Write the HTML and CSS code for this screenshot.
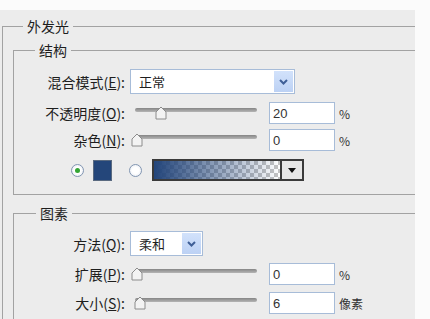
FILE: index.html
```html
<!DOCTYPE html>
<html lang="zh-CN">
<head>
    <meta charset="UTF-8">
    <meta name="viewport" content="width=device-width, initial-scale=1.0">
    <title>外发光</title>
    <link rel="stylesheet" href="styles.css">
</head>
<body>
    <div class="panel">
        <fieldset class="group outer">
            <legend>外发光</legend>

            <fieldset class="group inner struct">
                <legend>结构</legend>
                <div class="row row-select">
                    <label class="lbl">混合模式(<u>E</u>):</label>
                    <div class="select select-wide">
                        <span class="select-text">正常</span>
                        <span class="drop"><svg width="9" height="6" viewBox="0 0 9 6"><polyline points="1,1 4.5,4.5 8,1" fill="none" stroke="#3f5f97" stroke-width="2"/></svg></span>
                    </div>
                </div>
                <div class="row row-opacity">
                    <label class="lbl">不透明度(<u>O</u>):</label>
                    <div class="slider">
                        <svg class="thumb" style="left:25px" width="12" height="14" viewBox="0 0 12 14"><path d="M6 1 L11 6 L11 13 L1 13 L1 6 Z" fill="#f3f3f3" stroke="#8c8c8c"/></svg>
                    </div>
                    <input class="num" type="text" value="20">
                    <span class="unit">%</span>
                </div>
                <div class="row row-noise">
                    <label class="lbl">杂色(<u>N</u>):</label>
                    <div class="slider">
                        <svg class="thumb" style="left:1px" width="12" height="14" viewBox="0 0 12 14"><path d="M6 1 L11 6 L11 13 L1 13 L1 6 Z" fill="#f3f3f3" stroke="#8c8c8c"/></svg>
                    </div>
                    <input class="num" type="text" value="0">
                    <span class="unit">%</span>
                </div>
                <div class="row row-color">
                    <span class="radio checked"></span>
                    <span class="swatch"></span>
                    <span class="radio"></span>
                    <div class="gradient">
                        <span class="gradient-fill"></span>
                        <span class="gradient-drop"><svg width="8" height="5" viewBox="0 0 8 5"><path d="M0 0 L8 0 L4 5 Z" fill="#111"/></svg></span>
                    </div>
                </div>
            </fieldset>

            <fieldset class="group inner elements">
                <legend>图素</legend>
                <div class="row row-select">
                    <label class="lbl">方法(<u>Q</u>):</label>
                    <div class="select select-short">
                        <span class="select-text">柔和</span>
                        <span class="drop"><svg width="9" height="6" viewBox="0 0 9 6"><polyline points="1,1 4.5,4.5 8,1" fill="none" stroke="#3f5f97" stroke-width="2"/></svg></span>
                    </div>
                </div>
                <div class="row row-spread">
                    <label class="lbl">扩展(<u>P</u>):</label>
                    <div class="slider">
                        <svg class="thumb" style="left:1px" width="12" height="14" viewBox="0 0 12 14"><path d="M6 1 L11 6 L11 13 L1 13 L1 6 Z" fill="#f3f3f3" stroke="#8c8c8c"/></svg>
                    </div>
                    <input class="num" type="text" value="0">
                    <span class="unit">%</span>
                </div>
                <div class="row row-size">
                    <label class="lbl">大小(<u>S</u>):</label>
                    <div class="slider">
                        <svg class="thumb" style="left:4px" width="12" height="14" viewBox="0 0 12 14"><path d="M6 1 L11 6 L11 13 L1 13 L1 6 Z" fill="#f3f3f3" stroke="#8c8c8c"/></svg>
                    </div>
                    <input class="num" type="text" value="6">
                    <span class="unit">像素</span>
                </div>
            </fieldset>
        </fieldset>
    </div>
</body>
</html>
```

FILE: styles.css
```css
html, body {
    margin: 0;
    padding: 0;
    background: #fbfbfb;
}
body {
    padding-top: 10px;
    font-family: "Noto Sans CJK SC", "Liberation Sans", sans-serif;
    font-size: 14px;
    color: #1e1e1e;
}
.panel {
    width: 415px;
    height: 309px;
    background: #ececec;
    overflow: hidden;
}
.group {
    margin: 0;
    padding: 0;
    border: none;
    border-top: 1px solid #a2a2a2;
    border-left: 1px solid #a2a2a2;
    min-inline-size: 0;
}
.group legend {
    padding: 0 4px;
    line-height: 16px;
    font-size: 14px;
}
.outer {
    margin: 8px 0 0 2px;
}
.outer > legend {
    margin-left: 20px;
}
.inner {
    margin-left: 10px;
}
.struct {
    margin-top: 8px;
    padding: 11px 0 13px 0;
    border-bottom: 1px solid #a2a2a2;
}
.struct > legend {
    margin-left: 21px;
}
.elements {
    margin-top: 10px;
    padding: 10px 0 20px 0;
}
.elements > legend {
    margin-left: 22px;
}

/* rows */
.row {
    display: flex;
    align-items: center;
    height: 22px;
}
.row-select { height: 25px; }
.row-opacity { margin-top: 8px; }
.row-noise { margin-top: 5px; }
.row-color { margin-top: 8px; }
.row-spread { margin-top: 7px; }
.row-size { margin-top: 7px; }

.lbl {
    width: 111px;
    text-align: right;
    white-space: nowrap;
    margin-right: 5px;
}

/* select */
.select {
    height: 25px;
    box-sizing: border-box;
    border: 1px solid #a7bcd8;
    background: #fff;
    display: flex;
    align-items: center;
    justify-content: space-between;
    padding: 1px;
}
.select-wide { width: 165px; }
.select-short { width: 73px; }
.select-text {
    padding-left: 7px;
    font-size: 13px;
}
.drop {
    width: 19px;
    height: 21px;
    background: linear-gradient(#d2e2fb, #bcd1f4);
    display: flex;
    align-items: center;
    justify-content: center;
}

/* slider */
.slider {
    position: relative;
    width: 130px;
    height: 22px;
    margin-right: 9px;
}
.slider::before {
    content: "";
    position: absolute;
    left: 5px;
    right: 3px;
    top: 6px;
    height: 4px;
    border-radius: 2px;
    background: linear-gradient(#858585, #b5b5b5);
}
.thumb {
    position: absolute;
    top: 4px;
}

/* inputs */
.num {
    width: 66px;
    height: 22px;
    box-sizing: border-box;
    border: 1px solid #a7bcd8;
    background: #fff;
    padding: 0 0 0 3px;
    margin: 0;
    font-family: "Liberation Sans", sans-serif;
    font-size: 13px;
    color: #333;
}
.unit {
    margin-left: 4px;
    font-size: 12px;
    color: #333;
}

/* colour row */
.radio {
    width: 13px;
    height: 13px;
    box-sizing: border-box;
    border-radius: 50%;
    border: 1px solid #8296b2;
    background: radial-gradient(circle, #fff 40%, #e2e6ee);
    display: flex;
    align-items: center;
    justify-content: center;
}
.radio.checked {
    margin-left: 57px;
}
.radio.checked::after {
    content: "";
    width: 5px;
    height: 5px;
    border-radius: 50%;
    background: #34a534;
}
.swatch {
    width: 19px;
    height: 21px;
    margin: 0 17px 0 9px;
    box-sizing: border-box;
    border: 1px solid #5a6a80;
    background: #24467a;
}
.gradient {
    width: 152px;
    height: 22px;
    margin-left: 10px;
    box-sizing: border-box;
    border: 2px solid #3a3a3a;
    display: flex;
}
.gradient-fill {
    flex: 1;
    background:
        linear-gradient(to right, #23457a, rgba(35, 69, 122, 0)),
        repeating-conic-gradient(#c4c4c4 0 25%, #fff 0 50%) 0 0 / 8px 8px;
}
.gradient-drop {
    width: 20px;
    border-left: 2px solid #3a3a3a;
    background: #e6e6e6;
    display: flex;
    align-items: center;
    justify-content: center;
}
```
